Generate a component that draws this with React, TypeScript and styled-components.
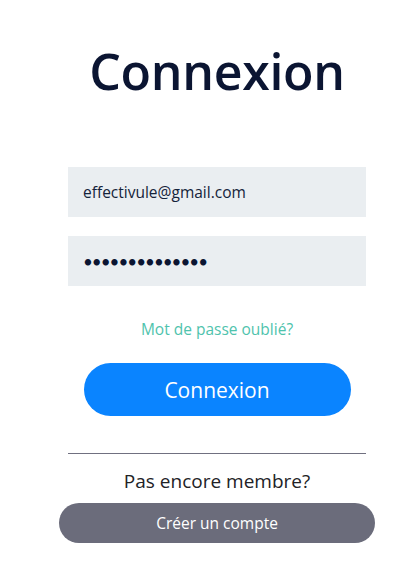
import React from "react";
import styled, { createGlobalStyle } from "styled-components";

const Global = createGlobalStyle`
  html, body { margin: 0; padding: 0; background: #ffffff; }
  body { font-family: "Open Sans", "Lato", sans-serif; }
`;

const Page = styled.div`
  width: 414px;
  height: 576px;
  box-sizing: border-box;
  padding: 0 0 0 20px;
  display: flex;
  flex-direction: column;
  align-items: center;
  background: #fff;
`;

const Title = styled.h1`
  margin: 41px 0 0;
  font-family: "Open Sans", sans-serif;
  font-size: 50px;
  font-weight: 600;
  line-height: 60px;
  color: #0b1532;
  letter-spacing: -0.3px;
`;

const Form = styled.form`
  margin-top: 66px;
  width: 298px;
  display: flex;
  flex-direction: column;
  gap: 19px;
`;

const Field = styled.input`
  box-sizing: border-box;
  width: 100%;
  height: 50px;
  border: none;
  outline: none;
  background: #eaeef1;
  padding: 0 15px;
  font-family: "Open Sans", sans-serif;
  font-size: 15.5px;
  letter-spacing: 0;
  color: #14233a;
  &[type="password"] {
    font-family: "Lato", sans-serif;
    font-size: 17px;
    letter-spacing: -1px;
    color: #0b1532;
  }
`;

const Forgot = styled.a`
  margin-top: 33px;
  font-size: 15.5px;
  line-height: 20px;
  color: #4fc3ad;
  text-decoration: none;
  cursor: pointer;
`;

const Pill = styled.button<{ $variant: "primary" | "secondary" }>`
  border: none;
  border-radius: 999px;
  color: #fff;
  font-family: "Open Sans", sans-serif;
  cursor: pointer;
  ${(p) =>
    p.$variant === "primary"
      ? `
    margin-top: 24px;
    width: 267px;
    height: 53px;
    background: #0a84ff;
    font-size: 21px;
  `
      : `
    margin-top: 11px;
    width: 316px;
    height: 40px;
    background: #6b6c7b;
    font-size: 15.5px;
  `}
`;

const Divider = styled.hr`
  margin: 37px 0 0;
  width: 298px;
  border: none;
  border-top: 1px solid #707080;
`;

const Prompt = styled.p`
  margin: 16px 0 0;
  font-size: 19px;
  line-height: 22px;
  color: #222226;
`;

export default function App() {
  return (
    <>
      <Global />
      <Page>
        <Title>Connexion</Title>
        <Form onSubmit={(e) => e.preventDefault()}>
          <Field type="email" defaultValue="effectivule@gmail.com" />
          <Field type="password" defaultValue="aaaaaaaaaaaaaa" />
        </Form>
        <Forgot>Mot de passe oublié?</Forgot>
        <Pill $variant="primary">Connexion</Pill>
        <Divider />
        <Prompt>Pas encore membre?</Prompt>
        <Pill $variant="secondary">Créer un compte</Pill>
      </Page>
    </>
  );
}
